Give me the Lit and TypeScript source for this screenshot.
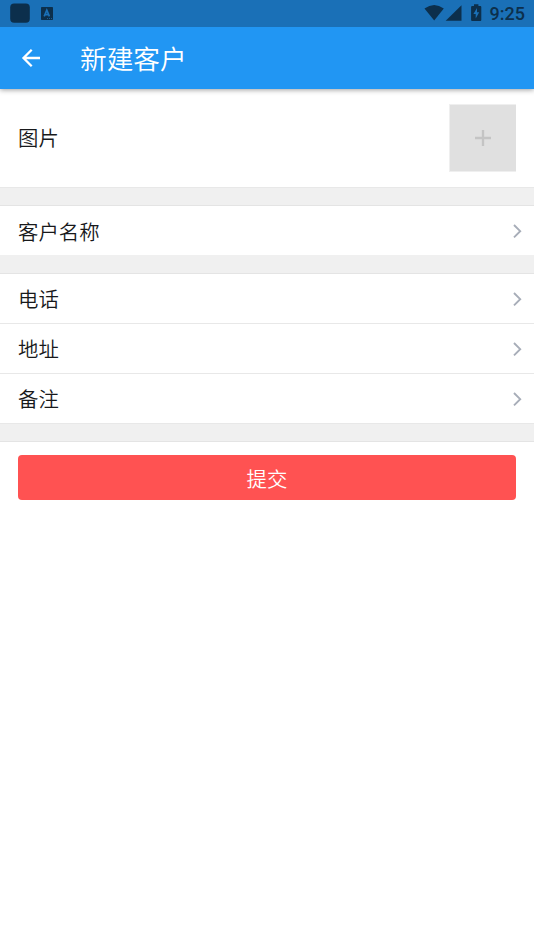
import { LitElement, html, css } from "lit";
import { customElement } from "lit/decorators.js";

@customElement("app-root")
class AppRoot extends LitElement {
  static styles = css`
    :host {
      display: flex;
      flex-direction: column;
      height: 950px;
      overflow: hidden;
      background: #fff;
      color: #18191b;
      font-family: "Noto Sans CJK SC", sans-serif;
      font-size: 20.4px;
      font-weight: 350;
    }
    * { box-sizing: border-box; }
    svg { display: block; flex: none; }
    .status {
      position: relative;
      z-index: 1;
      height: 27px;
      flex: none;
      display: flex;
      align-items: flex-start;
      justify-content: space-between;
      background: #1a70b7;
      color: #0c2f4c;
    }
    .system { display: flex; }
    .clock {
      width: 45px;
      padding-left: 0.5px;
      font: 500 18px/27px Roboto, sans-serif;
    }
    .bar {
      position: relative;
      height: 62px;
      flex: none;
      display: flex;
      align-items: center;
      padding-left: 18px;
      background: #2196f3;
      color: #fff;
      box-shadow: 0 1px 5px rgba(0, 0, 0, 0.38);
    }
    .title {
      margin: 0 0 0 36px;
      font-size: 26.7px;
      font-weight: 350;
      line-height: 62px;
    }
    .row {
      height: 50px;
      flex: none;
      display: flex;
      align-items: center;
      justify-content: space-between;
      padding: 0 10px 0 18px;
      border-bottom: 1px solid #e8e8e8;
      line-height: 30px;
    }
    .label { padding-bottom: 2px; }
    .name .label { padding-bottom: 0; }
    .photo {
      height: 99px;
      padding-right: 18px;
    }
    .add {
      width: 67px;
      height: 68px;
      display: grid;
      place-items: center;
      background: #e0e0e0;
      background-clip: padding-box;
      border: solid rgba(224, 224, 224, 0.5);
      border-width: 1px 0 1px 1px;
    }
    .gap {
      height: 18px;
      flex: none;
      background: #f0f0f0;
      border-bottom: 1px solid #e4e4e4;
    }
    .name { border-bottom-color: #f0f0f0; }
    .submit {
      height: 45px;
      margin: 13px 18px 0;
      padding: 0;
      border: 0;
      border-radius: 4px;
      background: #ff5252;
      color: #fff;
      font: inherit;
      flex: none;
    }
  `;

  row(label: string, extra = "") {
    return html`<div class="row ${extra}">
      <span class="label">${label}</span>
      <svg width="13" height="16" viewBox="0 0 13 16" fill="none" stroke="#a7adb8" stroke-width="1.9">
        <path d="M3 2 L9.2 8.2 L3 14.4" />
      </svg>
    </div>`;
  }

  render() {
    return html`
      <div class="status">
        <svg width="60" height="27" viewBox="0 0 60 27">
          <rect x="10.2" y="3.6" width="19.6" height="19.2" rx="4" fill="#0c2f4c" />
          <rect x="41" y="7" width="12" height="13" rx="0.7" fill="#0c2f4c" />
          <path d="M44.2 16.4 L46.8 10.2 L49.4 16.4 M45 14.6 H48.6" fill="none" stroke="#1a70b7" stroke-width="1.7" />
          <path d="M47 18.5 h5" stroke="#1a70b7" stroke-width="0.7" stroke-dasharray="1 1" />
        </svg>
        <div class="system">
          <svg width="65" height="27" viewBox="424 0 65 27" fill="#0c2f4c">
            <path d="M424.5 8.6 Q434.2 1.4 443.8 8.6 L434.2 20.6 Z" />
            <path d="M461.5 5.2 V20.8 H445.7 Z" />
            <path d="M474 4.3 h4.4 v1.6 h1.9 q1 0 1 1 v13 q0 1 -1 1 h-8.2 q-1 0 -1 -1 v-13 q0 -1 1 -1 h1.9 Z" />
            <path d="M477 8 L473.4 14 H475.7 V18.5 L479.2 12.2 H477 Z" fill="#1a70b7" />
          </svg>
          <div class="clock">9:25</div>
        </div>
      </div>
      <header class="bar">
        <svg width="26" height="26" viewBox="0 0 26 26" fill="none" stroke="#fff" stroke-width="2.3">
          <path d="M22 13 H6 M13.7 4.8 L5.5 13 L13.7 21.2" />
        </svg>
        <h1 class="title">新建客户</h1>
      </header>
      <div class="row photo">
        <span class="label">图片</span>
        <div class="add">
          <svg width="16" height="16" viewBox="0 0 16 16" stroke="#c4c4c4" stroke-width="2.3">
            <path d="M0 8 H16 M8 0 V16" />
          </svg>
        </div>
      </div>
      <div class="gap"></div>
      ${this.row("客户名称", "name")}
      <div class="gap"></div>
      ${this.row("电话")} ${this.row("地址")} ${this.row("备注")}
      <div class="gap"></div>
      <button class="submit">提交</button>
    `;
  }
}
